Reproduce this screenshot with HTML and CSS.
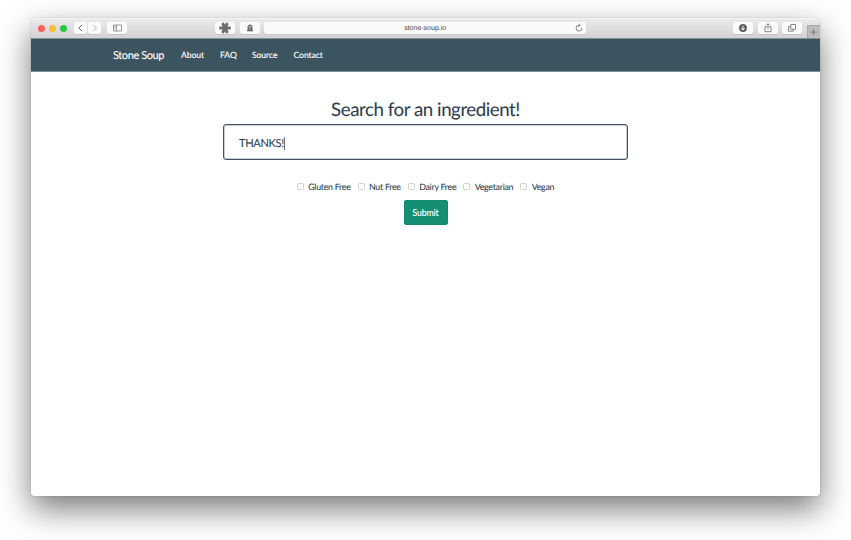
FILE: index.html
```html
<!DOCTYPE html>
<html lang="en">
<head>
<meta charset="utf-8">
<title>Stone Soup</title>
<link rel="stylesheet" href="styles.css">
</head>
<body>
<div class="window">
  <header class="toolbar">
    <div class="lights"><i class="red"></i><i class="yellow"></i><i class="green"></i></div>
    <div class="history">
      <span class="btn"><svg width="13" height="12" viewBox="0 0 13 12"><path d="M8 2.8 4.9 6 8 9.2" stroke="#666"/></svg></span>
      <span class="btn"><svg width="13" height="12" viewBox="0 0 13 12"><path d="M5.3 2.8 8.4 6 5.3 9.2" stroke="#b5b5b5"/></svg></span>
    </div>
    <span class="btn wide"><svg width="20" height="12" viewBox="0 0 20 12"><path d="M6.5 3h8v6h-8zM9.5 3v6M7.3 4.7h1.4M7.3 6.2h1.4" stroke="#909090" stroke-width=".9"/></svg></span>
    <span class="btn wide star"><svg width="20" height="12" viewBox="0 0 20 12"><path d="M4.3 6h11.4M7.5 1l5 10M12.5 1l-5 10" stroke="#6d6d6d" stroke-width="2.8"/></svg></span>
    <span class="btn wide"><svg width="20" height="12" viewBox="0 0 20 12"><path d="M7.5 9V4.9a2.5 2.5 0 0 1 5 0V9z" fill="#707070"/><path d="M7 8.7h6" stroke="#707070" stroke-width="1.2"/><path d="M8.7 4.6h2.6M9.2 6h1.6" stroke="#ccc" stroke-width=".8"/></svg></span>
    <div class="address"><span>stone-soup.io</span><svg width="10" height="12" viewBox="0 0 10 12"><path d="M5.2 3.3A2.9 2.9 0 1 0 7.9 6M4.5 1.8l1.7 1.5-1.7 1.5" stroke="#777" stroke-width=".9"/></svg></div>
    <span class="btn wide download"><svg width="20" height="12" viewBox="0 0 20 12"><circle cx="10" cy="6" r="3.9" fill="#5c5c5c"/><path d="M10 3.8v4M8.2 6.2 10 8l1.8-1.8" stroke="#fff"/></svg></span>
    <span class="btn wide"><svg width="20" height="12" viewBox="0 0 20 12"><path d="M8.8 4.7H7v5h6v-5h-1.8M10 7.2V2M8.3 3.3 10 1.6l1.7 1.7" stroke="#777" stroke-width=".9"/></svg></span>
    <span class="btn wide last"><svg width="20" height="12" viewBox="0 0 20 12"><path d="M8.8 2.5h4.7v4.7H8.8zM8.5 4.5H6.6v4.7h4.7V7.5" stroke="#777" stroke-width=".9"/></svg></span>
    <span class="newtab"><svg width="13" height="13" viewBox="0 0 13 13"><path d="M5.5 3v6.2M2.4 6.1h6.2" stroke="#777" stroke-width=".9"/></svg></span>
  </header>
  <nav class="nav"><a class="brand">Stone Soup</a><a class="about">About</a><a class="faq">FAQ</a><a class="source">Source</a><a>Contact</a></nav>
  <main class="main">
    <h1>Search for an ingredient!</h1>
    <div class="search"><span>THANKS!</span><i class="caret"></i></div>
    <div class="filters">
      <label><i></i>Gluten Free</label><label><i></i>Nut Free</label><label><i></i>Dairy Free</label><label><i></i>Vegetarian</label><label><i></i>Vegan</label>
    </div>
    <button class="submit">Submit</button>
  </main>
</div>
</body>
</html>
```
FILE: styles.css
```css
* { box-sizing: border-box; }
body { margin: 0; height: 540px; padding: 18px 31px 0; background: #fff; overflow: hidden; font-family: Lato, sans-serif; color: #2c3e50; text-rendering: geometricPrecision; }
svg { display: block; fill: none; }
.window { width: 789px; height: 478px; background: #fff; border-radius: 4px 4px 3px 3px; box-shadow: 0 0 1px rgba(0,0,0,.5), 0 13px 32px rgba(0,0,0,.53); }
.toolbar { height: 21px; display: flex; align-items: center; padding: 0 0 1px 7px; border-radius: 4px 4px 0 0; background: linear-gradient(#ebe9eb, #d4d1d4); border-top: 1px solid #f5f5f5; border-bottom: 1px solid #87928f; }
.toolbar > * { flex-shrink: 0; }
.lights { display: flex; gap: 4px; width: 36px; }
.lights i { width: 7px; height: 7px; border-radius: 50%; }
.red { background: #fc605b; }
.yellow { background: #fdbc30; }
.green { background: #2ac840; }
.history { display: flex; gap: 1px; margin-right: 6px; }
.btn { display: block; height: 12px; background: #fafafa; border-radius: 2px; box-shadow: 0 .5px .5px rgba(0,0,0,.18); }
.wide { width: 20px; margin-right: 4.6px; }
.star { margin-left: 83.4px; }
.address { width: 322px; height: 12px; display: flex; align-items: center; background: #fafafa; border-radius: 2px; box-shadow: 0 .5px .5px rgba(0,0,0,.15); font: 7px/12px "Liberation Sans", sans-serif; color: #444; }
.address span { flex: 1; text-align: center; padding: 1px 0 0 12px; }
.address svg { margin-right: 2px; }
.download { margin-left: 147px; }
.last { margin-right: 0; }
.newtab { align-self: flex-end; margin: 0 0 -1px auto; width: 13px; height: 13px; background: #bebbbe; border-left: 1px solid #aaa; border-top: 1px solid #aaa; }
.nav { height: 33px; padding: 0 0 0 82px; display: flex; align-items: center; background: #3c5360; color: #fff; font-size: 8.6px; letter-spacing: -.07px; border-bottom: 1px solid #7d8d96; -webkit-text-stroke: .12px; }
.brand { width: 68px; font-size: 11px; letter-spacing: -.4px; }
.about { width: 39px; }
.faq { width: 32px; }
.source { width: 41.5px; }
.main { display: flex; flex-direction: column; align-items: center; padding: 26px 0 0; -webkit-text-stroke: .08px; }
h1 { margin: 0; font-size: 18.7px; letter-spacing: -.45px; line-height: 22px; font-weight: 400; }
.search { margin-top: 4px; width: 405px; height: 36px; border: 1px solid #415162; box-shadow: inset 0 0 0 .5px #2c3e5080; border-radius: 3px; display: flex; align-items: center; padding: 2px 0 0 15px; font-size: 11.1px; letter-spacing: -.35px; }
.caret { width: 1px; height: 13px; margin-left: .5px; background: #647180; }
.filters { display: flex; gap: 7px; margin-top: 20px; height: 12px; align-items: center; font-size: 8.8px; letter-spacing: -.26px; }
.filters label { display: flex; align-items: center; }
.filters i { width: 7px; height: 7px; margin-right: 4.4px; border: 1px solid #d0d0d0; border-radius: 1.5px; }
.submit { margin-top: 8px; width: 44px; height: 25px; padding: 0; border: 1px solid #0f8a6e; border-radius: 2px; background: #158f74; color: #fff; font: 8.7px Lato, sans-serif; letter-spacing: -.1px; -webkit-text-stroke: .12px; }
```
